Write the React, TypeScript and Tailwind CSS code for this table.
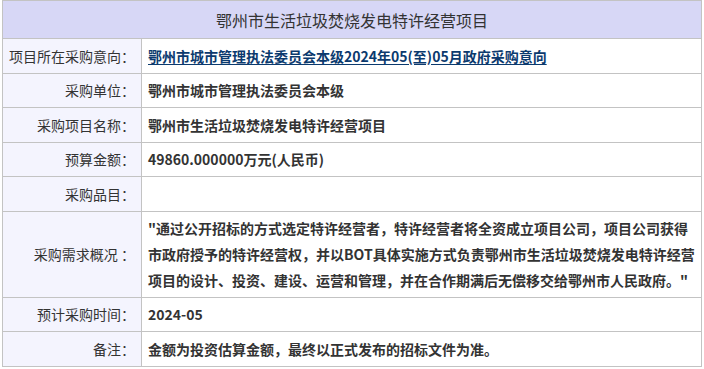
import React from "react";

interface Row {
  label: string;
  value?: React.ReactNode;
  multi?: boolean;
}

const rows: Row[] = [
  {
    label: "项目所在采购意向：",
    value: (
      <a href="#" className="text-[#0b3a6e] underline underline-offset-2 font-bold">
        鄂州市城市管理执法委员会本级2024年05(至)05月政府采购意向
      </a>
    ),
  },
  { label: "采购单位：", value: "鄂州市城市管理执法委员会本级" },
  { label: "采购项目名称：", value: "鄂州市生活垃圾焚烧发电特许经营项目" },
  { label: "预算金额：", value: "49860.000000万元(人民币)" },
  { label: "采购品目：", value: "" },
  {
    label: "采购需求概况 ：",
    value: (
      <>
        <span className="block whitespace-nowrap">
          "通过公开招标的方式选定特许经营者，特许经营者将全资成立项目公司，项目公司获得
        </span>
        <span className="block whitespace-nowrap">
          市政府授予的特许经营权，并以BOT具体实施方式负责鄂州市生活垃圾焚烧发电特许经营
        </span>
        <span className="block whitespace-nowrap">
          项目的设计、投资、建设、运营和管理，并在合作期满后无偿移交给鄂州市人民政府。"
        </span>
      </>
    ),
    multi: true,
  },
  { label: "预计采购时间：", value: "2024-05" },
  { label: "备注：", value: "金额为投资估算金额，最终以正式发布的招标文件为准。" },
];

export default function App() {
  return (
    <div
      className="bg-white w-[704px] h-[369px] pl-[2px] text-[#333]"
      style={{ fontFamily: '"Noto Sans CJK SC", "Noto Sans", sans-serif' }}
    >
      <table className="w-[700px] border-collapse table-fixed">
        <colgroup>
          <col className="w-[139px]" />
          <col />
        </colgroup>
        <tbody>
          <tr className="h-[38px]">
            <td
              colSpan={2}
              className="border border-[#c3c3c3] bg-[#d7d7f6] text-center text-[16px] leading-[20px] p-0 text-[#333]"
            >
              鄂州市生活垃圾焚烧发电特许经营项目
            </td>
          </tr>
          {rows.map((r) => (
            <tr key={r.label} className={r.multi ? "h-[86px]" : "h-[34.5px]"}>
              <td className="border border-[#c3c3c3] bg-[#f4f4fe] text-right pr-[6px] py-0 text-[14px] leading-[20px] whitespace-nowrap align-middle">
                {r.label}
              </td>
              <td
                className={
                  "border border-[#c3c3c3] bg-white pl-[6px] pr-0 py-0 text-[14px] font-bold align-middle " +
                  (r.multi ? "leading-[26px]" : "leading-[20px]")
                }
              >
                {r.value}
              </td>
            </tr>
          ))}
        </tbody>
      </table>
    </div>
  );
}
